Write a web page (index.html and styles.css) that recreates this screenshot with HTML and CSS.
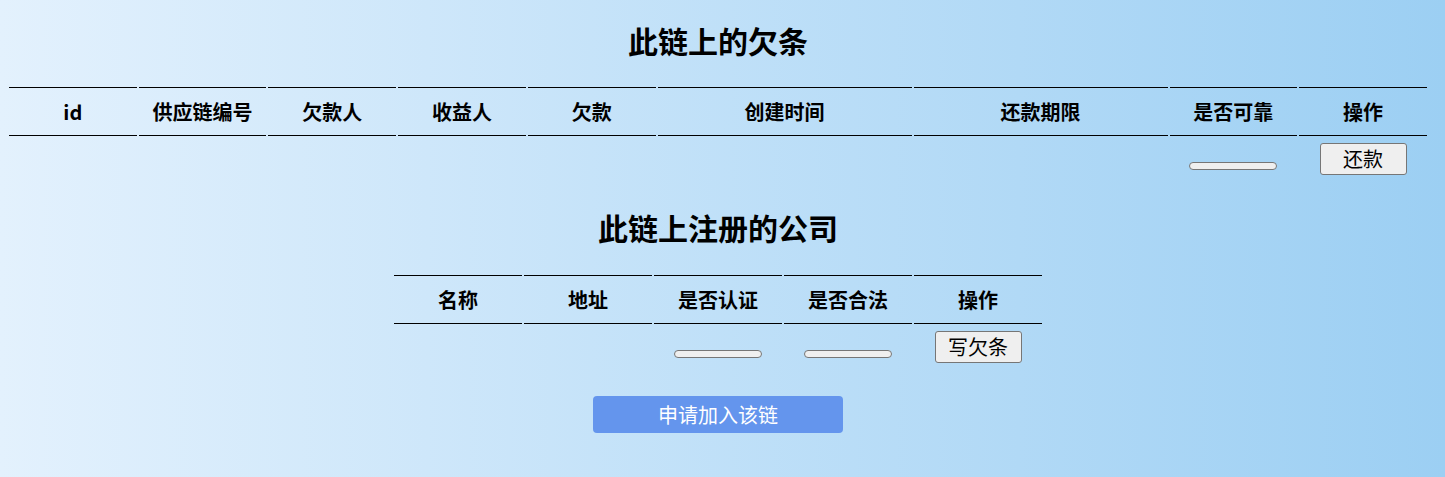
FILE: index.html
```html
<!DOCTYPE html>
<html lang="zh-CN">
<head>
<meta charset="utf-8">
<title>供应链</title>
<link rel="stylesheet" href="styles.css">
</head>
<body>
<div class="page">
  <h2 class="title title-first">此链上的欠条</h2>
  <table class="grid grid-wide">
    <colgroup>
      <col><col><col><col><col>
      <col class="c2"><col class="c2"><col><col>
    </colgroup>
    <thead>
      <tr>
        <th>id</th><th>供应链编号</th><th>欠款人</th><th>收益人</th><th>欠款</th>
        <th>创建时间</th><th>还款期限</th><th>是否可靠</th><th>操作</th>
      </tr>
    </thead>
    <tbody>
      <tr>
        <td></td><td></td><td></td><td></td><td></td><td></td><td></td>
        <td><span class="flag"></span></td>
        <td><button class="btn">还款</button></td>
      </tr>
    </tbody>
  </table>

  <h2 class="title title-second">此链上注册的公司</h2>
  <table class="grid grid-narrow">
    <thead>
      <tr>
        <th>名称</th><th>地址</th><th>是否认证</th><th>是否合法</th><th>操作</th>
      </tr>
    </thead>
    <tbody>
      <tr>
        <td></td><td></td>
        <td><span class="flag"></span></td>
        <td><span class="flag"></span></td>
        <td><button class="btn">写欠条</button></td>
      </tr>
    </tbody>
  </table>

  <div class="actions">
    <button class="join">申请加入该链</button>
  </div>
</div>
</body>
</html>
```

FILE: styles.css
```css
html, body {
  margin: 0;
  padding: 0;
}

body {
  min-height: 477px;
  background: linear-gradient(to right, #e3f1fd 0%, #9ccff3 100%);
  font-family: "Noto Sans CJK SC", "Noto Sans", sans-serif;
  color: #000;
}

.page {
  width: 1436px;
  display: flex;
  flex-direction: column;
  align-items: center;
}

.title {
  margin: 0;
  font-size: 30px;
  font-weight: bold;
  line-height: 44px;
  text-align: center;
}

.title-first {
  margin-top: 18px;
  margin-bottom: 23px;
}

.title-second {
  margin-top: 23px;
  margin-bottom: 24px;
}

.grid {
  border-collapse: separate;
  border-spacing: 2px;
  table-layout: fixed;
}

.grid-wide {
  width: 1422px;
}

.grid-wide .c2 {
  width: 254px;
}

.grid-narrow {
  width: 652px;
}

.grid th {
  height: 47px;
  padding: 0;
  border-top: 1px solid #000;
  border-bottom: 1px solid #000;
  font-size: 20px;
  font-weight: bold;
  text-align: center;
  vertical-align: middle;
}

.grid td {
  height: 32px;
  padding: 5px 0;
  text-align: center;
  vertical-align: top;
}

.flag {
  display: block;
  box-sizing: border-box;
  width: 88px;
  height: 8px;
  margin: 19px auto 0;
  background: #efefef;
  border: 1px solid #767676;
  border-radius: 4px;
}

.btn {
  box-sizing: border-box;
  width: 87px;
  height: 32px;
  padding: 0;
  background: #efefef;
  border: 1px solid #767676;
  border-radius: 3px;
  font-family: "Noto Sans CJK SC", "Noto Sans", sans-serif;
  font-size: 20px;
  line-height: 28px;
  color: #000;
}

.actions {
  margin-top: 26px;
}

.join {
  box-sizing: border-box;
  width: 250px;
  height: 37px;
  padding: 0;
  border: none;
  border-radius: 4px;
  background: #6495ed;
  color: #fff;
  font-family: "Noto Sans CJK SC", "Noto Sans", sans-serif;
  font-size: 20px;
  line-height: 37px;
}
```
